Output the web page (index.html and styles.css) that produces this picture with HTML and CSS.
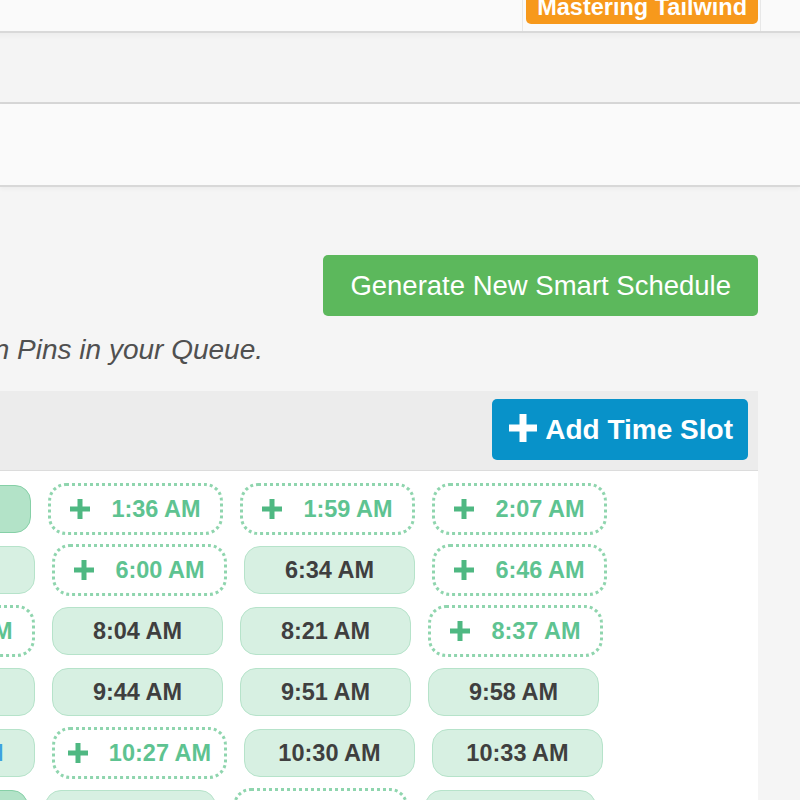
FILE: index.html
```html
<!DOCTYPE html>
<html lang="en">
<head>
<meta charset="utf-8">
<title>Smart Schedule</title>
<link rel="stylesheet" href="styles.css">
</head>
<body>
<header class="topbar">
  <div class="nav-item">
    <span class="badge">Mastering Tailwind</span>
  </div>
</header>
<div class="band band-sub"></div>
<div class="band band-tabs"></div>

<main class="main">
  <div class="actions">
    <button class="btn btn-green">Generate New Smart Schedule</button>
  </div>
  <div class="note-wrap">
    <p class="note">Your current schedule will publish all of your own Pins in your Queue.</p>
  </div>

  <section class="panel">
    <div class="panel-head">
      <button class="btn btn-blue">
        <svg class="plus-big" width="28" height="28" viewBox="0 0 28 28" aria-hidden="true"><rect x="0" y="10.5" width="28" height="7" fill="#fff"/><rect x="10.5" y="0" width="7" height="28" fill="#fff"/></svg>
        <span>Add Time Slot</span>
      </button>
    </div>
    <div class="panel-body">
      <div class="row shift-140">
        <div class="slot selected">1:17 AM</div>
        <div class="slot empty"><svg class="plus" width="20" height="20" viewBox="0 0 20 20"><rect x="0" y="7.5" width="20" height="5"/><rect x="7.5" y="0" width="5" height="20"/></svg><span>1:36 AM</span></div>
        <div class="slot empty"><svg class="plus" width="20" height="20" viewBox="0 0 20 20"><rect x="0" y="7.5" width="20" height="5"/><rect x="7.5" y="0" width="5" height="20"/></svg><span>1:59 AM</span></div>
        <div class="slot empty"><svg class="plus" width="20" height="20" viewBox="0 0 20 20"><rect x="0" y="7.5" width="20" height="5"/><rect x="7.5" y="0" width="5" height="20"/></svg><span>2:07 AM</span></div>
      </div>
      <div class="row shift-136">
        <div class="slot">5:52 AM</div>
        <div class="slot empty"><svg class="plus" width="20" height="20" viewBox="0 0 20 20"><rect x="0" y="7.5" width="20" height="5"/><rect x="7.5" y="0" width="5" height="20"/></svg><span>6:00 AM</span></div>
        <div class="slot">6:34 AM</div>
        <div class="slot empty"><svg class="plus" width="20" height="20" viewBox="0 0 20 20"><rect x="0" y="7.5" width="20" height="5"/><rect x="7.5" y="0" width="5" height="20"/></svg><span>6:46 AM</span></div>
      </div>
      <div class="row shift-140">
        <div class="slot empty"><svg class="plus" width="20" height="20" viewBox="0 0 20 20"><rect x="0" y="7.5" width="20" height="5"/><rect x="7.5" y="0" width="5" height="20"/></svg><span>7:58 AM</span></div>
        <div class="slot">8:04 AM</div>
        <div class="slot">8:21 AM</div>
        <div class="slot empty"><svg class="plus" width="20" height="20" viewBox="0 0 20 20"><rect x="0" y="7.5" width="20" height="5"/><rect x="7.5" y="0" width="5" height="20"/></svg><span>8:37 AM</span></div>
      </div>
      <div class="row shift-136">
        <div class="slot">9:37 AM</div>
        <div class="slot">9:44 AM</div>
        <div class="slot">9:51 AM</div>
        <div class="slot">9:58 AM</div>
      </div>
      <div class="row shift-136">
        <div class="slot pinned">10:24 AM</div>
        <div class="slot empty"><svg class="plus" width="20" height="20" viewBox="0 0 20 20"><rect x="0" y="7.5" width="20" height="5"/><rect x="7.5" y="0" width="5" height="20"/></svg><span>10:27 AM</span></div>
        <div class="slot">10:30 AM</div>
        <div class="slot">10:33 AM</div>
      </div>
      <div class="row shift-143">
        <div class="slot selected">10:36 AM</div>
        <div class="slot">10:41 AM</div>
        <div class="slot empty"><svg class="plus" width="20" height="20" viewBox="0 0 20 20"><rect x="0" y="7.5" width="20" height="5"/><rect x="7.5" y="0" width="5" height="20"/></svg><span>10:48 AM</span></div>
        <div class="slot">10:52 AM</div>
      </div>
    </div>
  </section>
</main>
</body>
</html>
```
FILE: styles.css
```css
* { box-sizing: border-box; }

html, body {
  margin: 0;
  padding: 0;
}

body {
  background: #f5f5f5;
  font-family: "Liberation Sans", Arial, sans-serif;
  overflow: hidden;
  width: 800px;
  height: 800px;
}

/* top navigation bar */
.topbar {
  height: 33px;
  background: #fafafa;
  border-bottom: 2px solid #d9d9d9;
  display: flex;
  justify-content: flex-end;
  padding-right: 39px;
}

.nav-item {
  border-left: 1px solid #e8e8e8;
  border-right: 1px solid #e8e8e8;
  padding: 0 2px 0 3px;
  display: flex;
  align-items: flex-start;
}

.badge {
  display: block;
  margin-top: -5px;
  height: 29px;
  line-height: 24px;
  padding: 0 11px 0 11px;
  background: #f7991c;
  color: #fff;
  font-weight: bold;
  font-size: 23.5px;
  border-radius: 0 0 5px 5px;
  white-space: nowrap;
}

/* bands below header */
.band-sub {
  height: 71px;
  background: #f4f4f4;
  border-bottom: 2px solid #d6d6d6;
  box-shadow: inset 0 8px 6px -6px rgba(0, 0, 0, 0.04);
}

.band-tabs {
  height: 83px;
  background: #fafafa;
  border-bottom: 2px solid #d8d8d8;
  box-shadow: 0 2px 4px rgba(0, 0, 0, 0.04);
}

/* main area */
.main {
  margin: 0 42px 0 0;
}

.actions {
  display: flex;
  justify-content: flex-end;
  margin-top: 68px;
}

.btn {
  border: none;
  font-family: "Liberation Sans", Arial, sans-serif;
  color: #fff;
  border-radius: 5px;
  height: 61px;
  display: flex;
  align-items: center;
  cursor: pointer;
}

.btn-green {
  background: #5cb85c;
  font-size: 27.5px;
  padding: 0 27px;
}

.note-wrap {
  width: 263px;
  display: flex;
  justify-content: flex-end;
  margin-top: 17px;
}

.note {
  flex-shrink: 0;
  margin: 0;
  white-space: nowrap;
  font-style: italic;
  font-size: 28px;
  line-height: 34px;
  color: #505050;
}

/* panel */
.panel {
  margin-top: 24px;
  background: #fff;
}

.panel-head {
  height: 80px;
  background: #ececec;
  border-bottom: 1px solid #dcdcdc;
  display: flex;
  justify-content: flex-end;
  align-items: flex-start;
  padding: 8px 10px 0 0;
}

.btn-blue {
  background: #0892c9;
  font-size: 28px;
  font-weight: bold;
  padding: 0 15px 0 17px;
  gap: 8px;
}

.plus-big { display: block; flex-shrink: 0; margin-top: -3px; }

.panel-body {
  padding-top: 12px;
  display: flex;
  flex-direction: column;
  gap: 9px;
  height: 330px;
  overflow: hidden;
}

.row {
  display: flex;
  gap: 17px;
  align-items: center;
  height: 52px;
  flex-shrink: 0;
}

.shift-136 { margin-left: -136px; }
.shift-140 { margin-left: -140px; }
.shift-143 { margin-left: -143px; }

.slot {
  flex-shrink: 0;
  width: 171px;
  height: 48px;
  border: 1px solid #b6e3ca;
  background: #d7f0e2;
  border-radius: 16px;
  display: flex;
  align-items: center;
  justify-content: center;
  font-size: 23.5px;
  font-weight: bold;
  color: #3f3f3f;
  white-space: nowrap;
}

.slot.selected {
  background: #b3e3c8;
  border-color: #86d0a7;
}

.slot.pinned {
  color: #3ea2e0;
  padding-left: 6px;
}

.slot.empty {
  width: 175px;
  height: 52px;
  border: 3px dotted #8fd5ae;
  background: #fff;
  border-radius: 18px;
  color: #5ec391;
  gap: 21px;
}

.plus {
  display: block;
  flex-shrink: 0;
  fill: #4fb882;
}
```
